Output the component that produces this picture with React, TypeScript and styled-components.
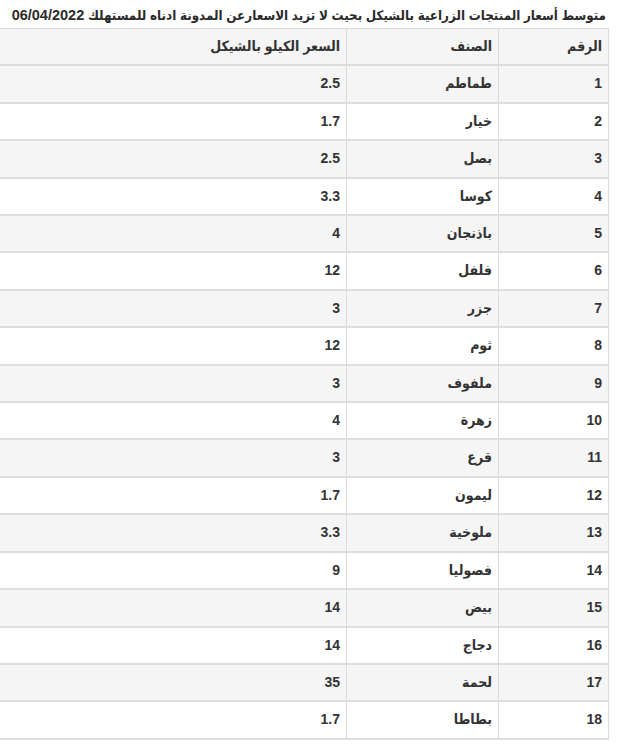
import React from "react";
import styled, { createGlobalStyle } from "styled-components";

const Global = createGlobalStyle`
  html, body { margin: 0; padding: 0; background: #fff; }
  body { direction: rtl; font-family: "Liberation Sans", "DejaVu Sans", sans-serif; color: #333; overflow: hidden; }
`;

const Page = styled.div`
  width: 620px;
  padding: 6px 11px 0 0;
  box-sizing: border-box;
`;

const Title = styled.h3`
  margin: 0 3px 3px 0;
  font-family: "Liberation Sans", "DejaVu Sans Condensed", "DejaVu Sans", sans-serif;
  font-stretch: condensed;
  font-size: 13.3px;
  font-weight: bold;
  line-height: 18px;
  color: #2b2b2b;
  white-space: nowrap;
`;

const DateText = styled.span`
  font-size: 14.5px;
`;

const Table = styled.table`
  width: 609px;
  border-collapse: collapse;
  background: #fff;
  font-size: 14px;
  font-family: "Liberation Sans", "DejaVu Sans Condensed", "DejaVu Sans", sans-serif;
  font-stretch: condensed;
`;

const Row = styled.tr<{ $striped?: boolean }>`
  background: ${(p) => (p.$striped ? "#f5f5f5" : "#fff")};
`;

const Head = styled.th<{ $w?: number }>`
  width: ${(p) => (p.$w ? `${p.$w}px` : "auto")};
  text-align: right;
  font-weight: bold;
  padding: 8px 6px 8px 6px;
  line-height: 19.4px;
  border-top: 1px solid #dcdcdc;
  border-right: 1px solid #dcdcdc;
  border-bottom: 2px solid #dcdcdc;
  color: #333;
`;

const Cell = styled.td`
  text-align: right;
  font-weight: bold;
  padding: 8px 6px;
  line-height: 19.4px;
  border-top: 2px solid #dedede;
  border-right: 1px solid #dcdcdc;
  color: #333;
`;

const Body = styled.tbody`
  tr:last-child td { border-bottom: 2px solid #dedede; }
`;

const rows: [string, string][] = [
  ["طماطم", "2.5"],
  ["خيار", "1.7"],
  ["بصل", "2.5"],
  ["كوسا", "3.3"],
  ["باذنجان", "4"],
  ["فلفل", "12"],
  ["جزر", "3"],
  ["ثوم", "12"],
  ["ملفوف", "3"],
  ["زهرة", "4"],
  ["قرع", "3"],
  ["ليمون", "1.7"],
  ["ملوخية", "3.3"],
  ["فصوليا", "9"],
  ["بيض", "14"],
  ["دجاج", "14"],
  ["لحمة", "35"],
  ["بطاطا", "1.7"],
];

export default function App() {
  return (
    <Page>
      <Global />
      <Title>
        متوسط أسعار المنتجات الزراعية بالشيكل بحيث لا تزيد الاسعارعن المدونة ادناه للمستهلك <DateText>06/04/2022</DateText>
      </Title>
      <Table>
        <thead>
          <Row $striped>
            <Head $w={97}>الرقم</Head>
            <Head $w={139}>الصنف</Head>
            <Head>السعر الكيلو بالشيكل</Head>
          </Row>
        </thead>
        <Body>
          {rows.map(([name, price], i) => (
            <Row key={i} $striped={i % 2 === 0}>
              <Cell>{i + 1}</Cell>
              <Cell>{name}</Cell>
              <Cell>{price}</Cell>
            </Row>
          ))}
        </Body>
      </Table>
    </Page>
  );
}
